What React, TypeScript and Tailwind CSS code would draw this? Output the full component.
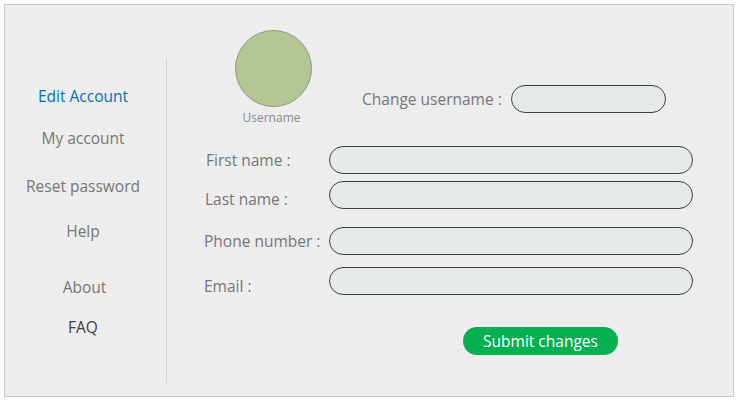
import React from "react";

const font = { fontFamily: '"Open Sans", "Noto Sans", Arial, sans-serif' };

function Field({ label, rowClass, labelClass }: { label: string; rowClass: string; labelClass: string }) {
  return (
    <div className={`flex items-start ${rowClass}`}>
      <div className={`w-[125px] shrink-0 text-[15.5px] leading-[20px] text-[#767676] whitespace-nowrap ${labelClass}`}>{label}</div>
      <div className="w-[364px] h-[28px] rounded-full border border-[#404040] bg-[#e5eae8]" />
    </div>
  );
}

export default function App() {
  return (
    <div className="w-[739px] h-[402px] bg-white pt-[4px] pl-[4px]" style={font}>
      <div className="w-[730px] h-[393px] border border-[#c8c8c8] bg-[#ededed] flex">
        {/* Sidebar */}
        <div className="w-[161px] shrink-0 flex flex-col items-center pr-[5px] text-[15.5px] leading-[20px] text-[#767676]">
          <div className="mt-[81px] text-[#0070c0]">Edit Account</div>
          <div className="mt-[22px]">My account</div>
          <div className="mt-[28px]">Reset password</div>
          <div className="mt-[25px]">Help</div>
          <div className="mt-[36px] pl-[3px]">About</div>
          <div className="mt-[20px] text-[#404040]">FAQ</div>
        </div>

        {/* Divider */}
        <div className="w-px bg-[#d4d4d4] mt-[53px] h-[325px] shrink-0" />

        {/* Main */}
        <div className="flex-1 flex flex-col">
          <div className="flex items-start">
            <div className="ml-[68px] mt-[25px] flex flex-col items-center">
              <div className="w-[77px] h-[77px] rounded-full bg-[#b5c594] border border-[#8d9a7a]" />
              <div className="mt-[4px] pr-[4px] text-[12px] leading-[14px] text-[#8a8a8a]">Username</div>
            </div>
            <div className="ml-[50px] mt-[80px] flex items-center">
              <div className="w-[149px] text-[15.5px] leading-[20px] text-[#767676] whitespace-nowrap">Change username :</div>
              <div className="w-[155px] h-[28px] rounded-full border border-[#404040] bg-[#e5eae8]" />
            </div>
          </div>

          <div className="flex flex-col pl-[37px] mt-[21px]">
            <Field label="First name :" rowClass="" labelClass="mt-[4px] pl-[2px]" />
            <Field label="Last name :" rowClass="mt-[7px]" labelClass="mt-[8px] pl-[1px]" />
            <Field label="Phone number :" rowClass="mt-[18px]" labelClass="mt-[4px]" />
            <Field label="Email :" rowClass="mt-[12px]" labelClass="mt-[9px]" />
          </div>

          <button className="ml-[296px] mt-[31px] w-[155px] h-[28px] rounded-full bg-[#06b050] text-white text-[15.5px] leading-[20px]">
            Submit changes
          </button>
        </div>
      </div>
    </div>
  );
}
